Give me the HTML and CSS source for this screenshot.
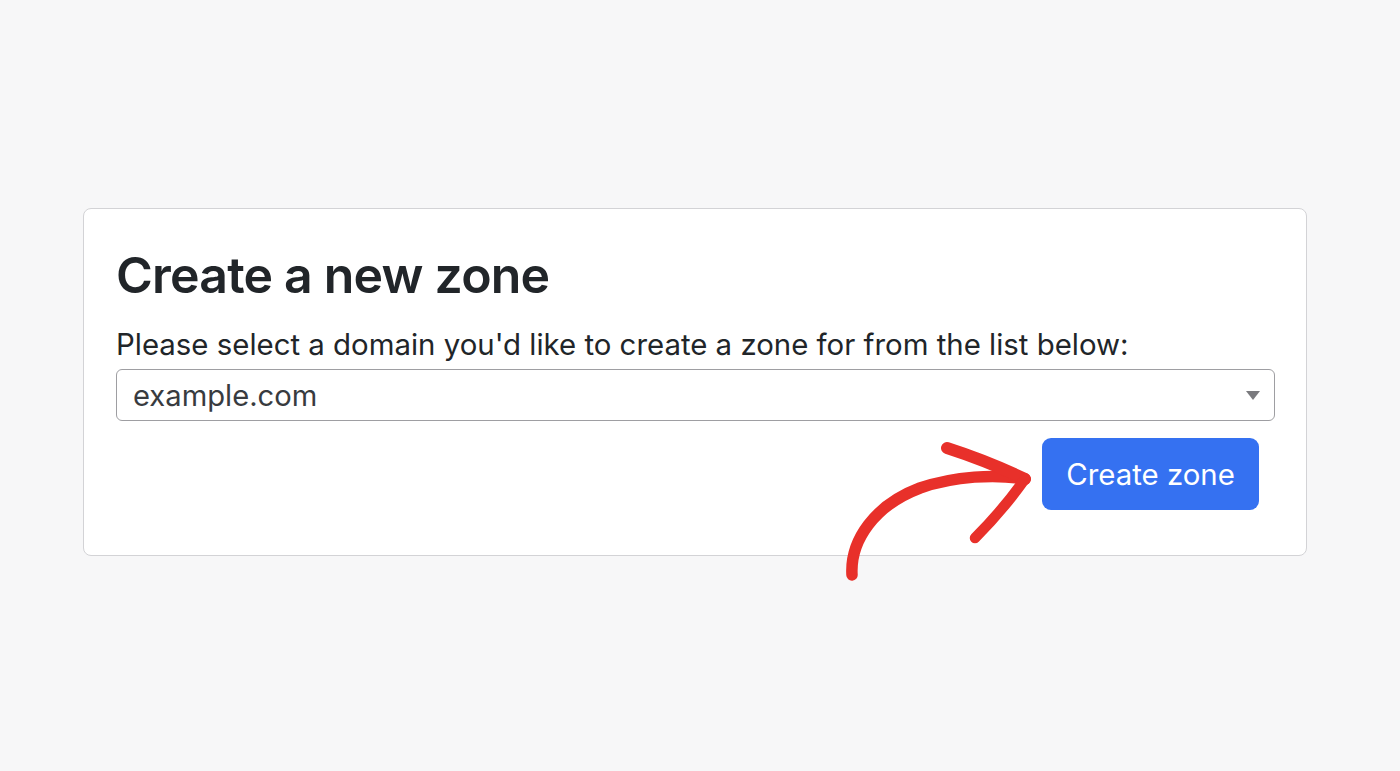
FILE: index.html
```html
<!DOCTYPE html>
<html lang="en">
<head>
<meta charset="utf-8">
<title>Create a new zone</title>
<link rel="stylesheet" href="styles.css">
</head>
<body>
<main class="page">
  <section class="card">
    <h1 class="title">Create a new zone</h1>
    <label class="label" for="domain">Please select a domain you'd like to create a zone for from the list below:</label>
    <div class="select" id="domain">
      <span class="select-value">example.com</span>
      <span class="caret"></span>
    </div>
    <div class="actions">
      <button class="btn" type="button">Create zone</button>
    </div>
  </section>
  <svg class="arrow" width="210" height="160" viewBox="0 0 210 160" aria-hidden="true">
    <path d="M22 145 C 20 110, 45 75, 90 58 C 125 46, 165 44, 195 49" fill="none" stroke="#e8302a" stroke-width="11.5" stroke-linecap="round"/>
    <path d="M117 18 C 145 27, 172 38, 195 49" fill="none" stroke="#e8302a" stroke-width="12" stroke-linecap="round"/>
    <path d="M195 49 C 180 70, 163 90, 145 108" fill="none" stroke="#e8302a" stroke-width="10.5" stroke-linecap="round"/>
  </svg>
</main>
</body>
</html>
```
FILE: styles.css
```css
html, body {
  margin: 0;
  padding: 0;
  background: #f7f7f8;
}
body {
  font-family: "Inter", "Liberation Sans", Arial, sans-serif;
  color: #212529;
}
.page {
  position: relative;
  box-sizing: border-box;
  min-height: 771px;
  padding: 208px 0 0 83px;
}
.card {
  box-sizing: border-box;
  width: 1224px;
  height: 348px;
  background: #fff;
  border: 1px solid #d3d3d6;
  border-radius: 8px;
  padding: 36px 31px 0 32px;
}
.title {
  margin: 0;
  font-size: 50px;
  font-weight: 600;
  line-height: 60px;
  letter-spacing: -0.8px;
  color: #212529;
}
.label {
  display: block;
  margin-top: 22px;
  font-size: 29.4px;
  line-height: 36px;
  color: #212529;
}
.select {
  box-sizing: border-box;
  margin-top: 6px;
  height: 52px;
  border: 1.5px solid #9e9ea2;
  border-radius: 6px;
  display: flex;
  align-items: center;
  justify-content: space-between;
  padding: 0 14px 0 16px;
}
.select-value {
  font-size: 29.2px;
  color: #383b3f;
}
.caret {
  width: 0;
  height: 0;
  border-left: 7px solid transparent;
  border-right: 7px solid transparent;
  border-top: 9px solid #7a7a7e;
}
.actions {
  display: flex;
  justify-content: flex-end;
  margin-top: 17px;
  padding-right: 16px;
}
.btn {
  width: 217px;
  height: 72px;
  border: 0;
  border-radius: 9px;
  background: #3571f1;
  color: #fff;
  font-family: inherit;
  font-size: 29.4px;
  padding: 0;
}
.arrow {
  position: absolute;
  left: 830px;
  top: 430px;
}
```
